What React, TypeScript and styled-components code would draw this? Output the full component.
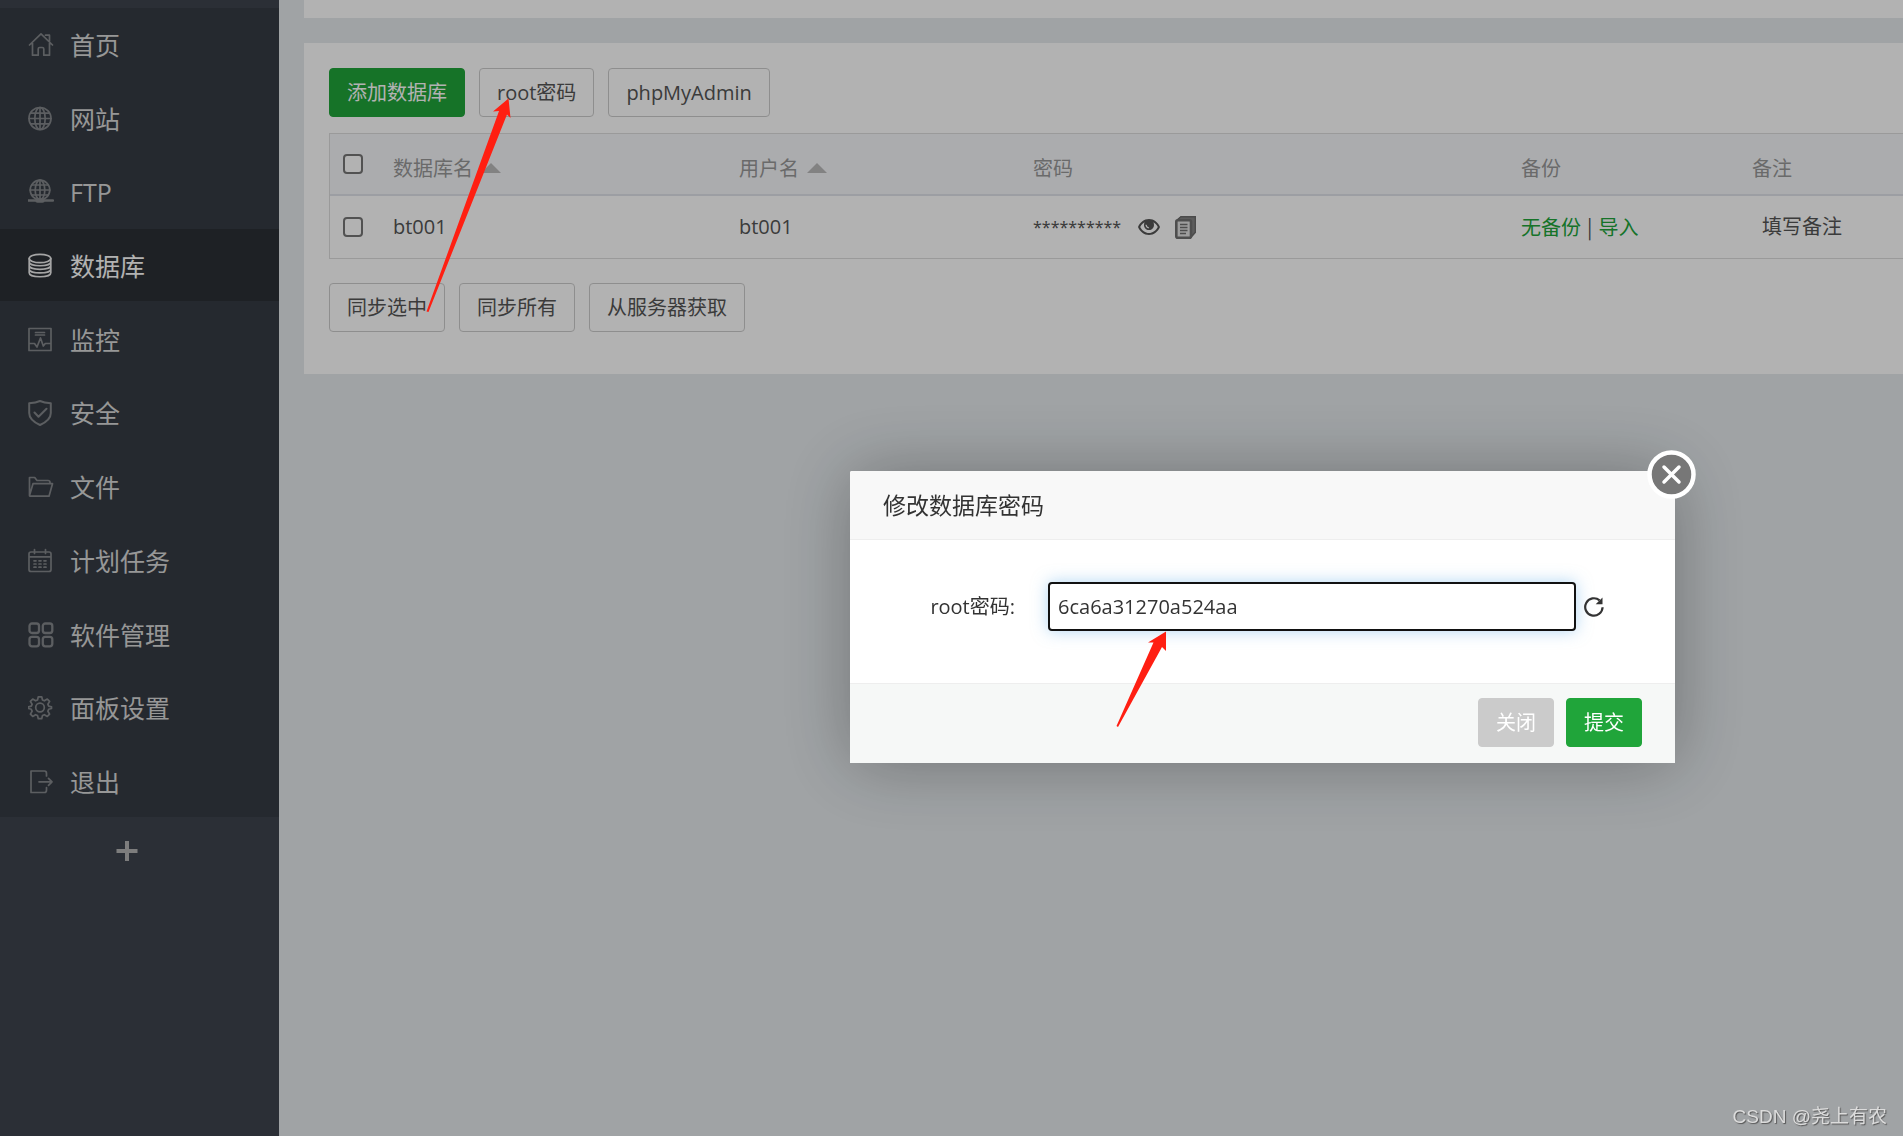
import React from "react";
import styled, { createGlobalStyle } from "styled-components";

const GlobalStyle = createGlobalStyle`
  *, *::before, *::after { box-sizing: border-box; }
  body {
    margin: 0;
    overflow: hidden;
    background: #e5eaed;
    color: #555;
    font: 400 20px/28px "Open Sans", "Noto Sans CJK SC", sans-serif;
  }
  button, input { font: inherit; }
  ul { margin: 0; padding: 0; list-style: none; }
`;

const Page = styled.div`
  display: flex;
  min-height: 100vh;
`;

/* ---------- sidebar ---------- */

const Sidebar = styled.nav`
  flex: 0 0 279px;
  padding-top: 8px;
  background: #3e444e;
`;

const Menu = styled.ul`
  display: flex;
  flex-direction: column;
  justify-content: space-between;
  height: 809px;
  background: #363c44;
`;

const MenuLink = styled.a<{ $active?: boolean }>`
  display: flex;
  align-items: center;
  gap: 16px;
  height: 72px;
  padding: 2px 28px 0;
  background: ${(p) => (p.$active ? "#2c3036" : "transparent")};
  color: ${(p) => (p.$active ? "#fff" : "#d8d8d8")};
  font-size: 25px;
  line-height: 36px;
  text-decoration: none;

  svg {
    width: 26px;
    height: 26px;
    color: ${(p) => (p.$active ? "#ececec" : "#84878b")};
  }
`;

const AddMenu = styled.button`
  display: block;
  width: 253px;
  height: 68px;
  padding: 0;
  border: 0;
  background: transparent;
  color: #b4b4b4;
  line-height: 0;
`;

/* ---------- content ---------- */

const Main = styled.main`
  flex: 1;
  min-width: 0;
  display: flex;
  flex-direction: column;
  gap: 25px;
  padding-left: 25px;
`;

const TopStrip = styled.div`
  height: 18px;
  background: #fff;
`;

const Card = styled.section`
  padding: 25px 0 42px 25px;
  background: #fff;
`;

const ButtonRow = styled.div`
  display: flex;
  gap: 14px;
`;

const Button = styled.button<{ $tone?: "green" | "grey" }>`
  height: 49px;
  padding: 1px 17px 0;
  border: 1px solid
    ${(p) => (p.$tone === "green" ? "#20a53a" : p.$tone === "grey" ? "#cbcbcb" : "#ccc")};
  border-radius: 4px;
  background: ${(p) => (p.$tone === "green" ? "#20a53a" : p.$tone === "grey" ? "#cbcbcb" : "#fff")};
  color: ${(p) => (p.$tone ? "#fff" : "#555")};
  white-space: nowrap;
`;

const DataTable = styled.table`
  width: 100%;
  margin: 16px 0 24px;
  table-layout: fixed;
  border-collapse: separate;
  border-spacing: 0;
  border: 1px solid #ddd;
  border-right: 0;
`;

const HeadCell = styled.th`
  height: 62px;
  padding: 9px 10px 0;
  border-bottom: 2px solid #e0e3ea;
  background: #f5f7fa;
  color: #999;
  font-weight: 400;
  text-align: left;
`;

const CheckHead = styled(HeadCell)`
  padding: 0 13px;
`;

const Cell = styled.td`
  height: 62px;
  padding: 0 10px;
  white-space: nowrap;
`;

const CheckCell = styled(Cell)`
  padding: 0 13px;
`;

const Check = styled.input`
  display: block;
  width: 20px;
  height: 20px;
  margin: 0;
  appearance: none;
  border: 2px solid #767676;
  border-radius: 4px;
  background: #fff;
`;

const SortArrow = styled.span`
  display: inline-block;
  margin-left: 8px;
  vertical-align: 3px;
  border: 10px solid transparent;
  border-top: 0;
  border-bottom-color: #bbb;
`;

const PasswordCell = styled.div`
  display: flex;
  align-items: center;
`;

const Stars = styled.span`
  margin-right: 17px;
  font-family: "Noto Sans", sans-serif;
  font-size: 16px;
`;

const IconButton = styled.button`
  padding: 0;
  border: 0;
  background: transparent;
  color: inherit;
  line-height: 0;
`;

const CopyButton = styled(IconButton)`
  margin-left: 15px;
`;

const GreenLink = styled.a`
  color: #20a53a;
  text-decoration: none;
`;

const Bar = styled.span`
  margin: 0 6px;
  font-family: "Noto Sans CJK SC", sans-serif;
`;

const Note = styled.span`
  padding-left: 10px;
`;

/* ---------- dialog ---------- */

const Shade = styled.div`
  position: fixed;
  inset: 0;
  background: rgba(0, 0, 0, 0.3);
`;

const Dialog = styled.form`
  position: fixed;
  top: 471px;
  left: 850px;
  width: 825px;
  border-radius: 2px;
  background: #fff;
  box-shadow: 1px 1px 71px rgba(0, 0, 0, 0.3);
  color: #333;
`;

const DialogTitle = styled.h2`
  margin: 0;
  padding: 20px 33px;
  border-bottom: 1px solid #eee;
  border-radius: 2px 2px 0 0;
  background: #f8f8f8;
  font-size: 23px;
  line-height: 28px;
  font-weight: 400;
`;

const CloseButton = styled.button`
  position: absolute;
  top: -21px;
  right: -21px;
  width: 49px;
  height: 49px;
  padding: 0;
  border: 0;
  background: transparent;
  line-height: 0;
`;

const Field = styled.div`
  display: flex;
  align-items: center;
  padding: 42px 71px 52px 33px;
`;

const Label = styled.label`
  flex: 0 0 132px;
  text-align: right;
`;

const TextInput = styled.input`
  flex: 1;
  min-width: 0;
  height: 49px;
  margin: 0 8px 0 33px;
  padding: 0 8px;
  border: 2px solid #111;
  border-radius: 4px;
  outline: 0;
  background: #fff;
  box-shadow: 0 0 16px rgba(102, 175, 233, 0.5);
  color: #333;
`;

const DialogFooter = styled.footer`
  display: flex;
  justify-content: flex-end;
  gap: 12px;
  padding: 14px 33px 16px;
  border-top: 1px solid #eee;
  background: #f6f8f7;
`;

const Arrows = styled.svg`
  position: fixed;
  top: 0;
  left: 0;
  pointer-events: none;
`;

const Watermark = styled.div`
  position: fixed;
  right: 16px;
  bottom: 5px;
  color: #dcdcdc;
  font-family: "Liberation Sans", "Noto Sans CJK SC", sans-serif;
  font-size: 19px;
  text-shadow: 1px 1px 1px #555;
`;

/* ---------- icons ---------- */

const Line = ({ children, w = 1.7 }: { children: React.ReactNode; w?: number }) => (
  <svg viewBox="0 0 26 26" fill="none" stroke="currentColor" strokeWidth={w} strokeLinejoin="round" strokeLinecap="round" aria-hidden="true">
    {children}
  </svg>
);

const HomeIcon = () => (
  <Line>
    <path d="M1.500 13 13 1.800 24.500 13M4.500 11v12.200h5.700V17q0-1.500 1.500-1.500h2.600q1.500 0 1.500 1.500v6.200h5.700V11M17.500 3.200h4v6" />
  </Line>
);
const GlobeIcon = () => (
  <Line>
    <circle cx="12" cy="12.500" r="11" />
    <ellipse cx="12" cy="12.500" rx="5.200" ry="11" />
    <path d="M12 1.500v22M1 12.500h22M3 7.200h18M3 17.800h18" />
  </Line>
);
const FtpIcon = () => (
  <Line>
    <circle cx="12" cy="11" r="9.800" />
    <ellipse cx="12" cy="11" rx="4.800" ry="9.800" />
    <path d="M12 1.200v19.600M2.200 11h19.600M3.800 6h16.400M3.800 16h16.400" />
    <path d="M0 21.500h25" strokeWidth="2.400" />
    <path d="M9.500 21.500h5" strokeWidth="4.500" />
  </Line>
);
const DatabaseIcon = () => (
  <Line>
    <ellipse cx="12" cy="5.500" rx="10.800" ry="4.200" />
    <path d="M1.200 5.500v14.200c0 5.400 21.600 5.400 21.600 0V5.500M1.200 9c0 5 21.600 5 21.600 0M1.200 12.600c0 5 21.600 5 21.600 0M1.200 16.200c0 5 21.600 5 21.600 0" />
  </Line>
);
const MonitorIcon = () => (
  <Line>
    <path d="M1 1.500h22v22H1zM1.500 16.500h5L9 20l3.500-9 2.800 8 2-2.500H23M7.500 5.500h9M7.500 8h9" />
  </Line>
);
const ShieldIcon = () => (
  <Line w={2}>
    <path d="M12 1c3.500 1.600 7.200 2 10.800 2.200V13c0 5.500-5.200 9.500-10.800 12C6.400 22.500 1.200 18.500 1.200 13V3.200C4.800 3 8.500 2.600 12 1zM6.500 12.500l4 4.200 8-8" />
  </Line>
);
const FolderIcon = () => (
  <Line>
    <path d="M1.500 21.500V3.500h5.200l2.300 3h11q2 0 2 2v1.200M1.500 21.500 5 9.700h19.500L21 22.200H2.500q-1 0-1-.7z" />
  </Line>
);
const CalendarIcon = () => (
  <Line>
    <path d="M3 4h18q2 0 2 2v15.500q0 2-2 2H3q-2 0-2-2V6q0-2 2-2zM1 8.800h22M6.500 1.500v4M17.500 1.500v4" />
    <path d="M6 12.800h2M11 12.800h2M16 12.800h2M6 16h2M11 16h2M16 16h2M6 19.200h2M11 19.200h2M16 19.200h2" />
  </Line>
);
const AppsIcon = () => (
  <Line w={2.3}>
    <rect x="1.500" y="1.500" width="9.500" height="9.500" rx="2.500" />
    <rect x="14.800" y="1.500" width="9.500" height="9.500" rx="2.500" />
    <rect x="1.500" y="14.800" width="9.500" height="9.500" rx="2.500" />
    <rect x="14.800" y="14.800" width="9.500" height="9.500" rx="2.500" />
  </Line>
);
const GearIcon = () => (
  <Line>
    <circle cx="12" cy="12.500" r="4.300" />
    <path d="M10.300 1.800h3.400l.8 3.200 1.900.8 2.900-1.700 2.300 2.300-1.700 2.900.8 1.900 2.800.6v1.700l-2.800.8-.8 1.900 1.700 2.900-2.300 2.300-2.900-1.700-1.900.8-.8 3.200h-3.400l-.8-3.200-1.900-.8-2.900 1.700-2.300-2.300 1.700-2.900-.8-1.900-2.800-.8v-1.700l2.800-.6.8-1.900-1.700-2.900 2.300-2.300 2.900 1.700 1.900-.8z" />
  </Line>
);
const ExitIcon = () => (
  <Line>
    <path d="M18.500 7V4.500q0-2.500-2-2.500H3v21.500h13.500q2 0 2-2.500v-2.500M11 12.800h12.500M20.500 9.300l3.500 3.500-3.500 3.500" />
  </Line>
);

const EyeIcon = () => (
  <svg width="22" height="16" viewBox="0 0 22 16" aria-hidden="true">
    <path fill="currentColor" fillRule="evenodd" d="M11 0C16 0 20 3.500 22 8c-2 4.500-6 8-11 8S2 12.500 0 8C2 3.500 6 0 11 0zM6.500 3.200C4.700 4.200 3.200 6 2.200 8c1.900 3.600 5 6 8.800 6s6.900-2.400 8.800-6c-1-2-2.500-3.800-4.300-4.800 1.600 4.600-.9 7.800-4.500 7.800S4.900 7.800 6.500 3.200z" />
    <path d="M8 5.800q.3 2.600 2.800 3" fill="none" stroke="#fff" strokeWidth="1.200" />
  </svg>
);
const CopyIcon = () => (
  <svg width="21" height="23" viewBox="0 0 21 23" aria-hidden="true">
    <path d="M6 0h15v16.500l-4.500 5V4H2z" fill="#858585" />
    <path d="M2 4 6 .7h14.300v15.600l-3.500 4" fill="none" stroke="#6c6c6c" strokeWidth="1.400" />
    <rect x="1.300" y="4.300" width="14.700" height="17.400" rx="1.500" fill="#e2e2e2" stroke="#707070" strokeWidth="2.600" />
    <path d="M5 8.500h7.500M5 11.500h7.500M5 14.500h7.500M5 17.500h6" stroke="#707070" strokeWidth="1.500" />
  </svg>
);
const RefreshIcon = () => (
  <svg width="20" height="20" viewBox="0 0 20 20" aria-hidden="true">
    <path d="M18.600 10.300A8.700 8.700 0 1 1 15.600 3.400" fill="none" stroke="currentColor" strokeWidth="2.200" />
    <path d="M18.500.5v6.800h-6.800z" fill="currentColor" />
  </svg>
);
const CloseIcon = () => (
  <svg width="49" height="49" viewBox="0 0 49 49" aria-hidden="true">
    <circle cx="24.500" cy="24.500" r="22" fill="#777" stroke="#fff" strokeWidth="4.500" />
    <path d="M17 17l15 15M32 17 17 32" stroke="#fff" strokeWidth="3.500" strokeLinecap="round" />
  </svg>
);

const menu = [
  { label: "首页", icon: <HomeIcon /> },
  { label: "网站", icon: <GlobeIcon /> },
  { label: "FTP", icon: <FtpIcon /> },
  { label: "数据库", icon: <DatabaseIcon />, active: true },
  { label: "监控", icon: <MonitorIcon /> },
  { label: "安全", icon: <ShieldIcon /> },
  { label: "文件", icon: <FolderIcon /> },
  { label: "计划任务", icon: <CalendarIcon /> },
  { label: "软件管理", icon: <AppsIcon /> },
  { label: "面板设置", icon: <GearIcon /> },
  { label: "退出", icon: <ExitIcon /> },
];

export default function App() {
  return (
    <>
      <GlobalStyle />
      <Page>
        <Sidebar>
          <Menu>
            {menu.map((m) => (
              <li key={m.label}>
                <MenuLink href="#" $active={m.active}>
                  {m.icon}
                  {m.label}
                </MenuLink>
              </li>
            ))}
          </Menu>
          <AddMenu type="button" aria-label="add">
            <svg width="22" height="22" viewBox="0 0 22 22" stroke="currentColor" strokeWidth="4">
              <path d="M0.500 11h21M11 1v20" />
            </svg>
          </AddMenu>
        </Sidebar>
        <Main>
          <TopStrip />
          <Card>
            <ButtonRow>
              <Button type="button" $tone="green">添加数据库</Button>
              <Button type="button">root密码</Button>
              <Button type="button">phpMyAdmin</Button>
            </ButtonRow>
            <DataTable>
              <colgroup>
                <col width="53" />
                <col width="346" />
                <col width="294" />
                <col width="488" />
                <col width="231" />
                <col />
              </colgroup>
              <thead>
                <tr>
                  <CheckHead><Check type="checkbox" aria-label="all" /></CheckHead>
                  <HeadCell>数据库名<SortArrow /></HeadCell>
                  <HeadCell>用户名<SortArrow /></HeadCell>
                  <HeadCell>密码</HeadCell>
                  <HeadCell>备份</HeadCell>
                  <HeadCell>备注</HeadCell>
                </tr>
              </thead>
              <tbody>
                <tr>
                  <CheckCell><Check type="checkbox" aria-label="bt001" /></CheckCell>
                  <Cell>bt001</Cell>
                  <Cell>bt001</Cell>
                  <Cell>
                    <PasswordCell>
                      <Stars>**********</Stars>
                      <IconButton type="button" aria-label="show"><EyeIcon /></IconButton>
                      <CopyButton type="button" aria-label="copy"><CopyIcon /></CopyButton>
                    </PasswordCell>
                  </Cell>
                  <Cell>
                    <GreenLink href="#">无备份</GreenLink>
                    <Bar>|</Bar>
                    <GreenLink href="#">导入</GreenLink>
                  </Cell>
                  <Cell><Note>填写备注</Note></Cell>
                </tr>
              </tbody>
            </DataTable>
            <ButtonRow>
              <Button type="button">同步选中</Button>
              <Button type="button">同步所有</Button>
              <Button type="button">从服务器获取</Button>
            </ButtonRow>
          </Card>
        </Main>
      </Page>

      <Shade />
      <Dialog onSubmit={(e) => e.preventDefault()}>
        <DialogTitle>修改数据库密码</DialogTitle>
        <Field>
          <Label htmlFor="root-password">root密码:</Label>
          <TextInput id="root-password" type="text" defaultValue="6ca6a31270a524aa" />
          <IconButton type="button" aria-label="refresh"><RefreshIcon /></IconButton>
        </Field>
        <DialogFooter>
          <Button type="button" $tone="grey">关闭</Button>
          <Button type="submit" $tone="green">提交</Button>
        </DialogFooter>
        <CloseButton type="button" aria-label="close"><CloseIcon /></CloseButton>
      </Dialog>

      <Arrows width="1200" height="740" viewBox="0 0 1200 740" fill="#ff1f12" aria-hidden="true">
        <path d="M508.500 98.500 493 111.500 499 111 426.500 311.500 428.500 312 507 114.500 510.500 118z" />
        <path d="M1166 631.500 1148 642.500 1153.500 642.500 1116.500 726 1118 727 1162 647 1166 651z" />
      </Arrows>
      <Watermark>CSDN @尧上有农</Watermark>
    </>
  );
}
